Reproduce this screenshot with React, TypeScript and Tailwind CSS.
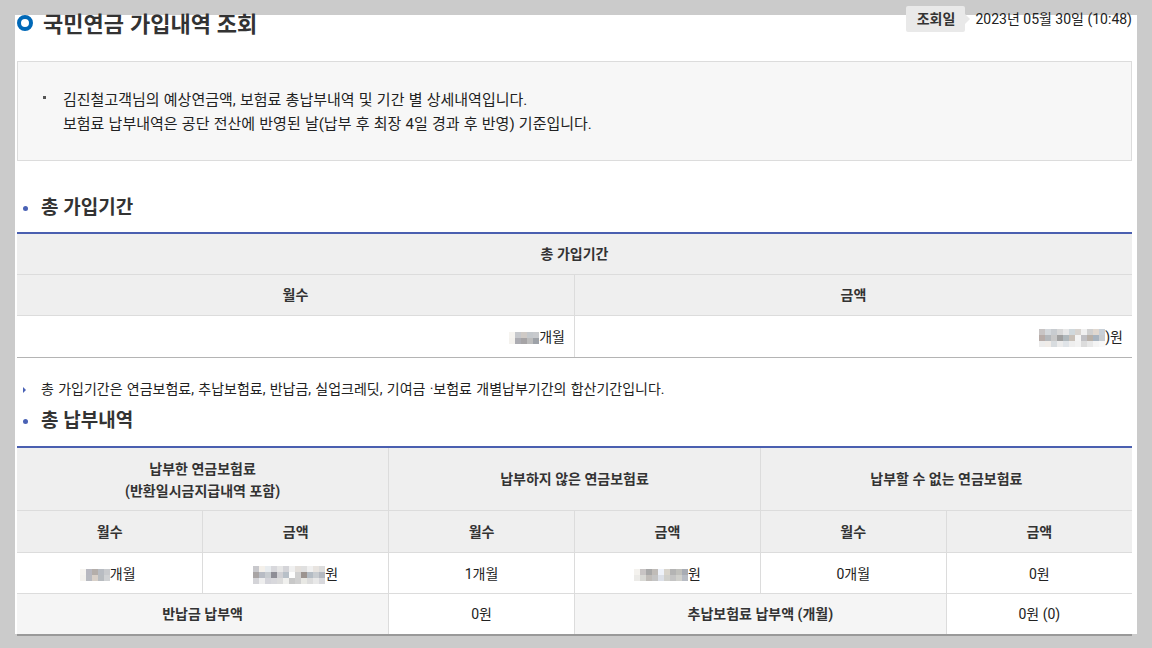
import React from 'react';

const FONT = 'font-["Roboto","Noto_Sans_CJK_KR",sans-serif]';

// blurred digits in the reference
function Mosaic({ cols, rows, cell, colors }: { cols: number; rows: number; cell: number; colors: string[] }) {
  return (
    <span
      className="inline-grid align-middle"
      style={{ gridTemplateColumns: `repeat(${cols}, ${cell}px)`, gridTemplateRows: `repeat(${rows}, ${cell}px)` }}
    >
      {colors.map((c, i) => <span key={i} style={{ background: c }} />)}
    </span>
  );
}

const M1 = ['#f6f4f0','#c6c8cc','#cfcac6','#c4c8cc','#c8cacd','#f4f2ee','#acacb2','#a6a4a6','#bcbcbc','#9ea2a8'];
const M1B = ['#f6f4f0','#b8b8c0','#b4aeaa','#b8bcc2','#c8cacd','#f4f2ee','#b8bac0','#d8d0c8','#b8bcc0','#d0d2d4'];
const M2 = [
  '#c8c8cc','#f4f0ea','#e8ecef','#d8d8dc','#e6e6e6','#d4d4d8','#f0f0f0','#e4e0dc','#e0e0e0','#f0f0f0','#e8e4e0','#dcdcdc',
  '#a8a4a4','#b8bcc4','#c8ccd0','#8e8e96','#d0d0d4','#b8c0c8','#fdfdfd','#d0d0d0','#9c9490','#b4bcc4','#c8ccd0','#b4b8c0',
  '#d4d4d8','#eeeeee','#d4d4da','#d8d8dc','#dcdcdc','#f0f0ee','#c8c8c8','#d0d0d0','#e8e8e4','#dcdcdc','#e8e8e8','#d8d8dc',
];
const M3 = [
  '#c8c4c4','#d4d8dc','#c8ccd0','#d8d8d8','#e8e8e8','#d0d8dc','#d8d4d0','#f0f0f0','#d0d0d0','#e0d8d0','#c8d0d8',
  '#b8aca8','#b4b8bc','#c8c8c8','#a0a0a0','#b0b8bc','#c8c0b8','#f4f4f4','#c0c0c4','#b8b0a8','#a8b4c0','#c8ccd0',
  '#ececec','#f0ece8','#d8dcdf','#ececec','#e0e4e8','#eeeeee','#f2f2f2','#dcdcdc','#e8e8e8','#f4f4f4','#f8f8f8',
];
const M4 = [
  '#f4f2ee','#c8c4c4','#a8a8a8','#c0bcb8','#eef2fa','#d8d4cc','#b4b4b4','#c0c0bc','#a8acb4',
  '#ecebe8','#d8d8d4','#c0bcb8','#c4c4c4','#dce0e8','#d0d0cc','#c4c4c4','#d0d0cc','#b8bcc4',
];

const th = 'bg-[#efefef] border border-[#dcdcdc] font-bold text-[14px] text-[#333] text-center px-0 pb-0 pt-[2px]';
const td = 'bg-white border border-[#dcdcdc] font-normal text-[14px] text-[#222] text-center px-0 pb-0 pt-[2px]';

export default function App() {
  return (
    <div className={`${FONT} h-[648px] w-[1152px] overflow-hidden bg-[#cbcbcb] pt-[15px] pl-[15px]`}>
      <div className="relative h-[619px] w-[1122px] bg-white pl-[2px] text-[#222]">
        {/* page title */}
        <div className="flex h-[46px] items-start">
          <span className="h-[16px] w-[16px] rounded-full border-[4px] border-[#0068b7] bg-white" />
          <h1 className="ml-[10px] -mt-[1px] text-[22px] leading-[22px] font-bold text-[#333] [word-spacing:0.5px]">국민연금 가입내역 조회</h1>
        </div>
        <div className="absolute -top-[9px] right-[5px] flex items-center">
          <span className="relative flex h-[26px] w-[59px] items-center justify-center rounded-[2px] bg-[#e9e9e9] text-[14px] font-bold text-[#333]">
            조회일
            <span className="absolute top-[8px] -right-[5px] h-0 w-0 border-y-[5px] border-l-[5px] border-y-transparent border-l-[#e9e9e9]" />
          </span>
          <span className="ml-[10px] text-[14px] text-[#222]">2023년 05월 30일 (10:48)</span>
        </div>

        {/* notice box */}
        <div className="flex h-[100px] w-[1115px] border border-[#dcdcdc] bg-[#f7f7f7] pt-[26px] pl-[25px] text-[15px] leading-[24px] text-[#222]">
          <span className="mt-[8px] h-[3px] w-[3px] bg-[#555]" />
          <p className="ml-[17px] [word-spacing:0.5px]">
            김진철고객님의 예상연금액, 보험료 총납부내역 및 기간 별 상세내역입니다.<br />
            보험료 납부내역은 공단 전산에 반영된 날(납부 후 최장 4일 경과 후 반영) 기준입니다.
          </p>
        </div>

        {/* total period */}
        <div className="mt-[35px] flex h-[24px] items-center pl-[6px]">
          <span className="h-[5px] w-[5px] rounded-full bg-[#4a62b5]" />
          <h2 className="ml-[13px] text-[19px] font-bold text-[#333]">총 가입기간</h2>
        </div>
        <table className="mt-[12px] w-[1115px] table-fixed border-collapse border-t-2 border-[#4a5fb0]">
          <tbody>
            <tr className="h-[41px]"><th colSpan={2} className={`${th} border-t-0 border-x-0`}>총 가입기간</th></tr>
            <tr className="h-[41px]">
              <th className={`${th} border-l-0`}>월수</th>
              <th className={`${th} border-r-0`}>금액</th>
            </tr>
            <tr className="h-[42px]">
              <td className={`${td} border-l-0 border-b-[#b4b4b4] pr-[9px] text-right`}>
                <Mosaic cols={5} rows={2} cell={6} colors={M1} />개월
              </td>
              <td className={`${td} border-r-0 border-b-[#b4b4b4] pr-[9px] text-right`}>
                <Mosaic cols={11} rows={3} cell={6} colors={M3} />)원
              </td>
            </tr>
          </tbody>
        </table>

        <div className="mt-[22px] flex h-[20px] items-center pl-[6px] text-[14px]">
          <span className="h-0 w-0 border-y-[3px] border-l-[3px] border-y-transparent border-l-[#4a62b5]" />
          <p className="ml-[15px] [word-spacing:0.8px]">총 가입기간은 연금보험료, 추납보험료, 반납금, 실업크레딧, 기여금 ·보험료 개별납부기간의 합산기간입니다.</p>
        </div>

        {/* total payments */}
        <div className="mt-[10px] flex h-[24px] items-center pl-[6px]">
          <span className="h-[5px] w-[5px] rounded-full bg-[#4a62b5]" />
          <h2 className="ml-[13px] text-[19px] font-bold text-[#333]">총 납부내역</h2>
        </div>
        <table className="mt-[12px] w-[1115px] table-fixed border-collapse border-t-2 border-[#4a5fb0]">
          <tbody>
            <tr className="h-[64px]">
              <th colSpan={2} className={`${th} border-t-0 border-l-0 leading-[22px]`}>납부한 연금보험료<br />(반환일시금지급내역 포함)</th>
              <th colSpan={2} className={`${th} border-t-0`}>납부하지 않은 연금보험료</th>
              <th colSpan={2} className={`${th} border-t-0 border-r-0`}>납부할 수 없는 연금보험료</th>
            </tr>
            <tr className="h-[42px]">
              <th className={`${th} border-l-0`}>월수</th>
              <th className={th}>금액</th>
              <th className={th}>월수</th>
              <th className={th}>금액</th>
              <th className={th}>월수</th>
              <th className={`${th} border-r-0`}>금액</th>
            </tr>
            <tr className="h-[41px]">
              <td className={`${td} border-l-0 pr-[4px]`}><Mosaic cols={5} rows={2} cell={6} colors={M1B} />개월</td>
              <td className={td}><Mosaic cols={12} rows={3} cell={6} colors={M2} />원</td>
              <td className={td}>1개월</td>
              <td className={td}><Mosaic cols={9} rows={2} cell={6} colors={M4} />원</td>
              <td className={td}>0개월</td>
              <td className={`${td} border-r-0`}>0원</td>
            </tr>
            <tr className="h-[41px]">
              <th colSpan={2} className={`${th} border-l-0 border-b-2 border-b-[#999] bg-[#f5f5f5]`}>반납금 납부액</th>
              <td className={`${td} border-b-2 border-b-[#999]`}>0원</td>
              <th colSpan={2} className={`${th} border-b-2 border-b-[#999] bg-[#f5f5f5]`}>추납보험료 납부액 (개월)</th>
              <td className={`${td} border-r-0 border-b-2 border-b-[#999]`}>0원 (0)</td>
            </tr>
          </tbody>
        </table>
      </div>
    </div>
  );
}
